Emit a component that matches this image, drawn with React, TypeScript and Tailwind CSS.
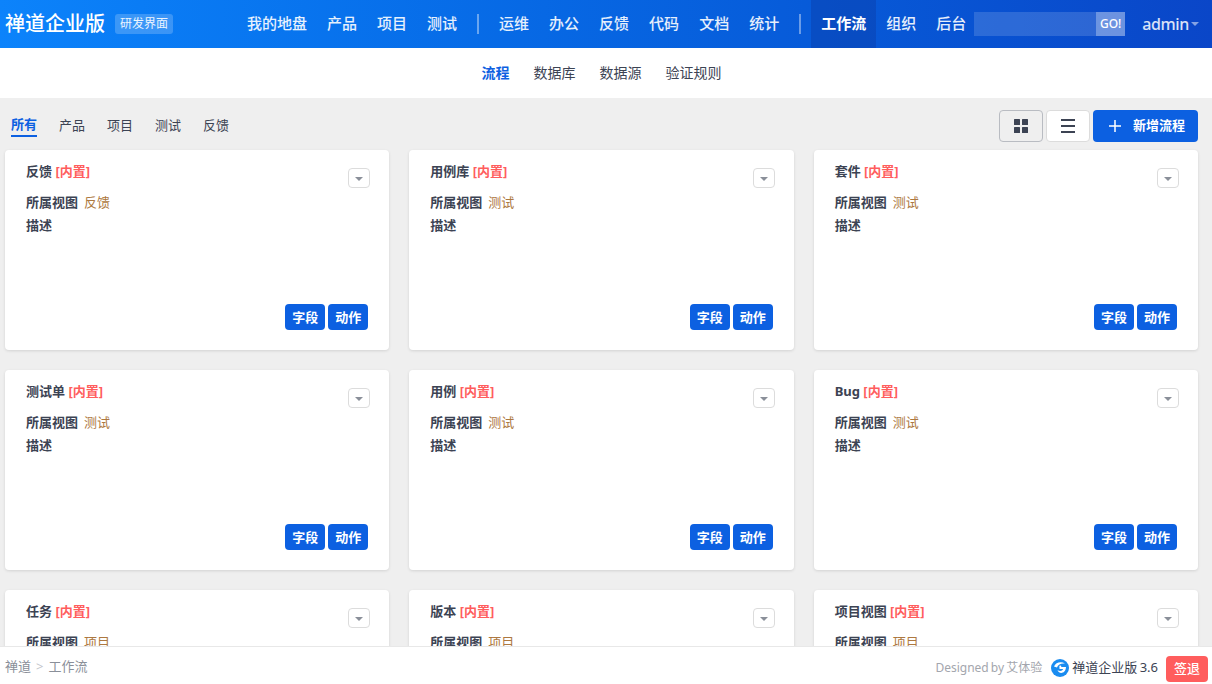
const NAV_LEFT = ["我的地盘", "产品", "项目", "测试"];
const NAV_MID = ["运维", "办公", "反馈", "代码", "文档", "统计"];
const SUB_NAV = ["流程", "数据库", "数据源", "验证规则"];
const FILTERS = ["所有", "产品", "项目", "测试", "反馈"];

const FLOWS = [
  { name: "反馈", view: "反馈" },
  { name: "用例库", view: "测试" },
  { name: "套件", view: "测试" },
  { name: "测试单", view: "测试" },
  { name: "用例", view: "测试" },
  { name: "Bug", view: "测试" },
  { name: "任务", view: "项目" },
  { name: "版本", view: "项目" },
  { name: "项目视图", view: "项目" },
];

function Logo() {
  return (
    <svg width="18" height="18" viewBox="0 0 18 18" className="shrink-0">
      <circle cx="9" cy="9" r="9" fill="#1a8cf0" />
      <path d="M3 7.5 C4.5 3.5 10 2 14 4.5 C10.5 4 7 5 6 8.5 Z" fill="#fff" />
      <path
        d="M15 8 H8.5 V10 H12.2 C11.4 12.2 8.3 12.6 6.6 11 C7.2 15 14.6 15.6 15 8 Z"
        fill="#fff"
      />
      <circle cx="9.3" cy="7.4" r="1" fill="#fff" />
    </svg>
  );
}

function FlowCard({ name, view }: { name: string; view: string }) {
  return (
    <div className="flex h-[200px] flex-col rounded-[4px] bg-white pt-[11px] pr-[21px] pb-5 pl-[21px] shadow-[0_1px_3px_rgba(0,0,0,0.12)]">
      <div className="flex items-start justify-between">
        <div className="text-[13px] leading-5 font-bold text-[#3c4353]">
          {name} <span className="text-[#ff5d5d]">[内置]</span>
        </div>
        <button
          type="button"
          className="mt-[7px] -mr-0.5 flex h-5 w-[22px] items-center justify-center rounded-[4px] border border-[#dcdcdc] bg-white"
        >
          <span className="mt-0.5 h-0 w-0 border-x-4 border-t-4 border-x-transparent border-t-[#8a8f99]" />
        </button>
      </div>
      <div className="mt-1 flex gap-1.5 text-[13px] leading-5">
        <span className="font-bold text-[#3c4353]">所属视图</span>
        <span className="text-[#ad7840]">{view}</span>
      </div>
      <div className="mt-[3px] text-[13px] leading-5 font-bold text-[#3c4353]">描述</div>
      <div className="mt-auto flex justify-end gap-[3px]">
        <button type="button" className="h-[26px] w-10 rounded-[4px] bg-[#0c60e1] pt-px text-[13px] font-bold text-white">
          字段
        </button>
        <button type="button" className="h-[26px] w-10 rounded-[4px] bg-[#0c60e1] pt-px text-[13px] font-bold text-white">
          动作
        </button>
      </div>
    </div>
  );
}

export default function App() {
  return (
    <div
      className="flex h-[684px] w-full flex-col overflow-hidden bg-[#efefef] text-[#3c4353]"
      style={{ fontFamily: '"Noto Sans", "Noto Sans CJK SC", sans-serif' }}
    >
      {/* header */}
      <header className="flex h-12 shrink-0 items-center bg-gradient-to-r from-[#0c83fb] to-[#0a46c8] text-white">
        <div className="ml-[5px] text-[20px] leading-none font-medium">禅道企业版</div>
        <div className="ml-2.5 flex h-5 w-[58px] items-center justify-center rounded-[3px] bg-white/20 text-[12px] text-white/90">
          研发界面
        </div>
        <nav className="ml-[74px] flex h-full items-center text-[15px] font-medium text-white/90">
          <div className="flex gap-5 pb-px">
            {NAV_LEFT.map((item) => (
              <span key={item}>{item}</span>
            ))}
          </div>
          <div className="mx-5 h-5 w-0.5 bg-white/40" />
          <div className="flex gap-5 pb-px">
            {NAV_MID.map((item) => (
              <span key={item}>{item}</span>
            ))}
          </div>
          <div className="ml-5 h-5 w-0.5 bg-white/40" />
          <div className="ml-2.5 flex h-full w-[65px] items-center justify-center bg-[#0a3fae]/50 pb-px font-bold text-white">
            工作流
          </div>
          <div className="ml-2.5 flex gap-5 pb-px">
            <span>组织</span>
            <span>后台</span>
          </div>
        </nav>
        <div className="ml-2 flex h-6 w-[151px] justify-end bg-white/15">
          <div className="flex w-[29px] items-center justify-center bg-white/30 text-[12px] font-medium">GO!</div>
        </div>
        <div className="ml-[17px] flex items-center gap-0.5 pb-px text-[16px] font-medium tracking-[-0.4px] text-white/85">
          admin
          <span className="h-0 w-0 border-x-4 border-t-4 border-x-transparent border-t-white/50" />
        </div>
      </header>

      {/* sub navigation */}
      <div className="flex h-[50px] shrink-0 items-center justify-center gap-6 bg-white pr-[9px] pb-px text-[14px]">
        {SUB_NAV.map((item, i) => (
          <span key={item} className={i === 0 ? "font-bold text-[#0c60e1]" : "text-[#3c4353]"}>
            {item}
          </span>
        ))}
      </div>

      <main className="min-h-0 flex-1 overflow-hidden pr-3.5 pl-[5px]">
        {/* toolbar */}
        <div className="flex h-[52px] items-start justify-between">
          <div className="mt-[15px] ml-1.5 flex gap-[22px] text-[13px]">
            {FILTERS.map((item, i) => (
              <span
                key={item}
                className={
                  i === 0
                    ? "border-b-2 border-[#0c60e1] pt-0.5 pb-0.5 leading-[18px] font-bold text-[#0c60e1]"
                    : "pt-[3px] leading-[18px] text-[#3c4353]"
                }
              >
                {item}
              </span>
            ))}
          </div>
          <div className="mt-3 flex gap-[3px]">
            <button
              type="button"
              className="flex h-8 w-11 items-center justify-center rounded-[4px] border border-[#b9bcc2] bg-[#efefef]"
            >
              <svg width="14" height="14" viewBox="0 0 14 14" fill="#3c4353">
                <rect x="0" y="0" width="6" height="6" rx="0.5" />
                <rect x="8" y="0" width="6" height="6" rx="0.5" />
                <rect x="0" y="8" width="6" height="6" rx="0.5" />
                <rect x="8" y="8" width="6" height="6" rx="0.5" />
              </svg>
            </button>
            <button
              type="button"
              className="flex h-8 w-11 items-center justify-center rounded-[4px] border border-[#dcdcdc] bg-white"
            >
              <svg width="14" height="14" viewBox="0 0 14 14" fill="#3c4353">
                <rect x="0" y="0" width="14" height="2" />
                <rect x="0" y="6" width="14" height="2" />
                <rect x="0" y="12" width="14" height="2" />
              </svg>
            </button>
            <button
              type="button"
              className="flex h-8 w-[105px] items-center gap-3 rounded-[4px] bg-[#0c60e1] pl-4 text-[13px] font-bold text-white"
            >
              <svg width="12" height="12" viewBox="0 0 12 12" fill="#fff" className="shrink-0">
                <rect x="5.25" y="0" width="1.5" height="12" />
                <rect x="0" y="5.25" width="12" height="1.5" />
              </svg>
              新增流程
            </button>
          </div>
        </div>

        {/* flow cards */}
        <div className="grid grid-cols-3 gap-5">
          {FLOWS.map((flow) => (
            <FlowCard key={flow.name} name={flow.name} view={flow.view} />
          ))}
        </div>
      </main>

      {/* footer */}
      <footer className="flex h-[38px] shrink-0 items-start justify-between border-t border-[#e8e8e8] bg-white pr-1 pl-[5px]">
        <div className="mt-[9px] flex items-center gap-[5px] text-[13px] leading-5 text-[#8a8f99]">
          <span>禅道</span>
          <span className="text-[#c4c6cb]">&gt;</span>
          <span>工作流</span>
        </div>
        <div className="mt-[9px] flex h-[26px] items-center">
          <span className="-mt-0.5 text-[12px] [word-spacing:-1px] text-[#a3a6ad]">Designed by 艾体验</span>
          <span className="-mt-0.5 ml-[9px]">
            <Logo />
          </span>
          <span className="-mt-0.5 ml-[3px] text-[13px] [word-spacing:-1px] text-[#3c4353]">禅道企业版 3.6</span>
          <button
            type="button"
            className="ml-2 h-[26px] w-[42px] rounded-[4px] bg-[#ff5d5d] text-[13px] font-medium text-white"
          >
            签退
          </button>
        </div>
      </footer>
    </div>
  );
}
